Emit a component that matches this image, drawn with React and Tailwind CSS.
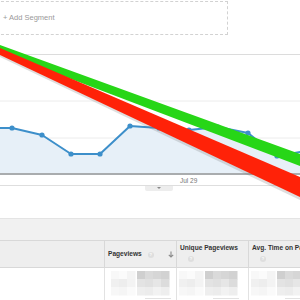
import React from 'react'

const points = [
  [-17, 73], [12, 73], [42, 80], [71, 99], [100, 99], [130, 71],
  [159, 73], [189, 75], [218, 72], [248, 78], [277, 101], [306, 96]
]

const mosaicRows = [
  ['#f8f8f8', '#fbfbfb', '#f4f4f4', '#cfcfcf', '#dadada', '#d6d6d6', '#d2d2d2'],
  ['#f0f0f0', '#ededed', '#f3f3f3', '#e3e3e3', '#e0e0e0', '#e6e6e6', '#dcdcdc'],
  ['#f7f7f7', '#f5f5f5', '#fafafa', '#eeeeee', '#ececec', '#f2f2f2', '#eeeeee']
]

function Mosaic({ shift = 0 }) {
  return (
    <svg width="64" height="30" className="block">
      {mosaicRows.map((row, r) =>
        row.map((c, i) => (
          <rect key={`${r}-${i}`} x={i * 8 + (i > 2 ? 2 : 0) + shift} y={r * 8} width="8.5" height="8.5" fill={c} />
        ))
      )}
      <rect x="34" y="27" width="26" height="1" fill="#e2e2e2" />
    </svg>
  )
}

function Help() {
  return (
    <span className="inline-flex w-[6px] h-[6px] rounded-full bg-[#dedede] text-white text-[4px] font-bold items-center justify-center leading-none">?</span>
  )
}

export default function App() {
  const line = points.map((p) => p.join(',')).join(' ')
  const area = `-17,119 ${line} 306,119`

  return (
    <div className="relative w-[300px] h-[300px] overflow-hidden bg-white font-['Liberation_Sans',Arial,sans-serif]">
      {/* segment bar */}
      <div className="h-[54px] border-b border-[#dcdcdc]">
        <div className="mt-px -ml-[4px] w-[232px] h-[34px] border border-dashed border-[#d2d2d2] flex items-center pl-[6px] text-[7.5px] text-[#9a9a9a]">
          + Add Segment
        </div>
      </div>

      {/* chart */}
      <svg width="300" height="118" className="block">
        <line x1="0" y1="46" x2="300" y2="46" stroke="#ececec" />
        <line x1="0" y1="83" x2="300" y2="83" stroke="#ececec" />
        <polygon points={area} fill="#e7f0f8" />
        <polyline points={line} fill="none" stroke="#3d8fca" strokeWidth="2" strokeLinejoin="round" />
        {points.map(([x, y]) => (
          <circle key={x} cx={x} cy={y} r="2.6" fill="#3d8fca" />
        ))}
      </svg>
      <div className="h-[2px] bg-[#a9acae]" />
      <div className="h-[11px] border-b border-[#dedede] pl-[180px] text-[6.5px] text-[#777] leading-[11px]">
        Jul 29
      </div>
      <div className="ml-[145px] w-[28px] h-[5px] bg-[#ededed] rounded-b-[2px] flex justify-center">
        <span className="mt-px w-0 h-0 border-x-[2px] border-x-transparent border-t-[2px] border-t-[#888]" />
      </div>

      <div className="h-[27px]" />

      {/* table */}
      <div className="h-[22px] bg-[#f1f1f1] border-t border-[#e4e4e4]" />
      <div className="grid grid-cols-[105px_72px_72px_1fr] h-[28px] bg-[#eeeeee] border-y border-[#d8d8d8] text-[6.6px] font-bold text-[#333]">
        <div className="border-r border-[#d8d8d8]" />
        <div className="border-r border-[#d8d8d8] flex items-center pl-[3px] pr-[2px]">
          <span>Pageviews</span>
          <span className="ml-[6px]"><Help /></span>
          <svg width="6" height="7" className="ml-auto" viewBox="0 0 6 7">
            <path d="M3 0.5V6M0.8 3.8L3 6L5.2 3.8" stroke="#8a8a8a" strokeWidth="1.1" fill="none" />
          </svg>
        </div>
        <div className="border-r border-[#d8d8d8] flex flex-col pl-[3px] pt-[4px] gap-[3px]">
          <span className="leading-none">Unique Pageviews</span>
          <span className="pl-[8px] leading-none"><Help /></span>
        </div>
        <div className="flex flex-col pl-[3px] pt-[4px] gap-[3px] whitespace-nowrap">
          <span className="leading-none">Avg. Time on Page</span>
          <span className="pl-[8px] leading-none"><Help /></span>
        </div>
      </div>
      <div className="grid grid-cols-[105px_72px_72px_1fr] h-[40px]">
        <div className="border-r border-[#e2e2e2]" />
        <div className="border-r border-[#e2e2e2] pl-[6px] pt-[3px]"><Mosaic /></div>
        <div className="border-r border-[#e2e2e2] pl-[2px] pt-[3px]"><Mosaic /></div>
        <div className="pl-[2px] pt-[3px]"><Mosaic /></div>
      </div>

      {/* markers */}
      <svg width="300" height="300" className="absolute inset-0 pointer-events-none">
        <polygon points="0,50 300,180 300,200 0,57" fill="#7a7a7a" opacity="0.25" />
        <polygon points="0,45 300,154 300,166 0,52" fill="#27d617" />
        <polygon points="0,48 300,177 300,197 0,55" fill="#ff2208" />
      </svg>
    </div>
  )
}
